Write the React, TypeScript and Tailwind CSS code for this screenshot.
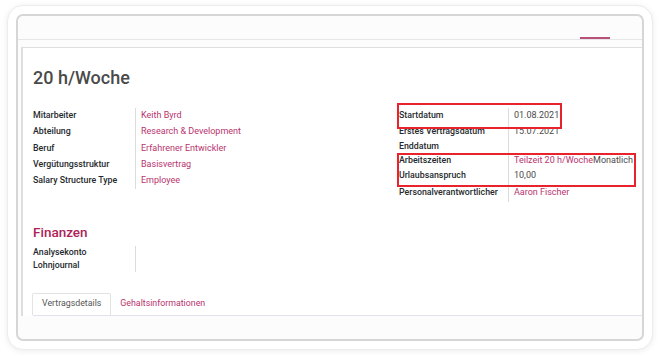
const leftRows = [
  { label: "Mitarbeiter", value: "Keith Byrd" },
  { label: "Abteilung", value: "Research & Development" },
  { label: "Beruf", value: "Erfahrener Entwickler" },
  { label: "Vergütungsstruktur", value: "Basisvertrag" },
  { label: "Salary Structure Type", value: "Employee" },
];

const Label = ({ children }: { children: React.ReactNode }) => (
  <span className="font-medium text-[8.8px] text-[#262a2e]">{children}</span>
);

export default function App() {
  return (
    <div
      className="w-[660px] h-[359px] bg-white pt-[5px] pl-[7px] overflow-hidden"
      style={{ fontFamily: "Roboto, 'Noto Sans', sans-serif" }}
    >
      <div className="w-[646px] h-[345px] rounded-[16px] border border-[#ececec] bg-white shadow-[0_1px_6px_rgba(0,0,0,0.08)] p-[8px]">
        <div className="w-[628px] h-[327px] rounded-[7px] border-2 border-[#d6d6d6] bg-[#fcfcfc] overflow-hidden flex flex-col">
          {/* top bar */}
          <div className="h-[24px] border-b border-[#e6e6e6] flex justify-end">
            <div className="mt-auto mr-[32px] w-[30px] h-[2px] bg-[#b8507a]" />
          </div>
          <div className="h-[7px]" />

          {/* sheet */}
          <div className="ml-[3px] h-[269px] bg-white border-t border-l-2 border-[#dedede] pl-[10px] text-[9px]">
            <h1 className="mt-[18px] h-[24px] leading-[24px] text-[18px] font-medium text-[#4a4a4a]">
              20 h/Woche
            </h1>

            <div className="mt-[17.5px] flex h-[94.5px]">
              {/* left group */}
              <div className="w-[366px] flex h-[81.7px]">
                <div className="w-[102px] flex flex-col">
                  {leftRows.map((r) => (
                    <div key={r.label} className="h-[16.33px] flex items-center">
                      <Label>{r.label}</Label>
                    </div>
                  ))}
                </div>
                <div className="border-l border-[#dcdcdc] pl-[5px] flex flex-col">
                  {leftRows.map((r) => (
                    <div key={r.label} className="h-[16.33px] flex items-center text-[#b8336e]">
                      {r.value}
                    </div>
                  ))}
                </div>
              </div>

              {/* right group */}
              <div className="relative flex">
                <div className="w-[109px] flex flex-col">
                  <div className="h-[16px] flex items-center"><Label>Startdatum</Label></div>
                  <div className="h-[16px] flex items-center"><Label>Erstes Vertragsdatum</Label></div>
                  <div className="h-[14px] flex items-center"><Label>Enddatum</Label></div>
                  <div className="h-[15px] flex items-center"><Label>Arbeitszeiten</Label></div>
                  <div className="h-[15px] flex items-center"><Label>Urlaubsanspruch</Label></div>
                  <div className="h-[18px] flex items-center"><Label>Personalverantwortlicher</Label></div>
                </div>
                <div className="border-l border-[#dcdcdc] pl-[5px] flex flex-col text-[#4a4a4a]">
                  <div className="h-[16px] flex items-center">01.08.2021</div>
                  <div className="h-[16px] flex items-center">15.07.2021</div>
                  <div className="h-[14px]" />
                  <div className="h-[15px] flex items-center">
                    <span className="text-[#b8336e]">Teilzeit 20 h/Woche</span>
                    <span>Monatlich</span>
                  </div>
                  <div className="h-[15px] flex items-center">10,00</div>
                  <div className="h-[18px] flex items-center text-[#b8336e]">Aaron Fischer</div>
                </div>

                {/* annotation boxes */}
                <div className="absolute left-[-2.5px] top-[-4.2px] w-[165px] h-[25.7px] border-2 border-[#e8232b]" />
                <div className="absolute left-[-2.5px] top-[45.8px] w-[239.5px] h-[33.4px] border-2 border-[#e8232b]" />
              </div>
            </div>

            <h2 className="mt-[20.5px] h-[18px] leading-[18px] text-[13.5px] font-medium text-[#ad2358]">
              Finanzen
            </h2>
            <div className="mt-[5.5px] flex">
              <div className="w-[102px] flex flex-col">
                <div className="h-[13px] flex items-center"><Label>Analysekonto</Label></div>
                <div className="h-[13px] flex items-center"><Label>Lohnjournal</Label></div>
              </div>
              <div className="border-l border-[#dcdcdc] h-[26px]" />
            </div>

            {/* tabs */}
            <div className="mt-[20.5px] flex border-b border-[#e3e1ef] text-[8.8px]">
              <div className="h-[22px] px-[9px] flex items-center border border-b-0 border-[#e3e3e3] rounded-t-[2px] bg-white text-[#555] -ml-px">
                Vertragsdetails
              </div>
              <div className="h-[22px] px-[9px] flex items-center text-[#b8336e]">
                Gehaltsinformationen
              </div>
            </div>
          </div>
        </div>
      </div>
    </div>
  );
}
